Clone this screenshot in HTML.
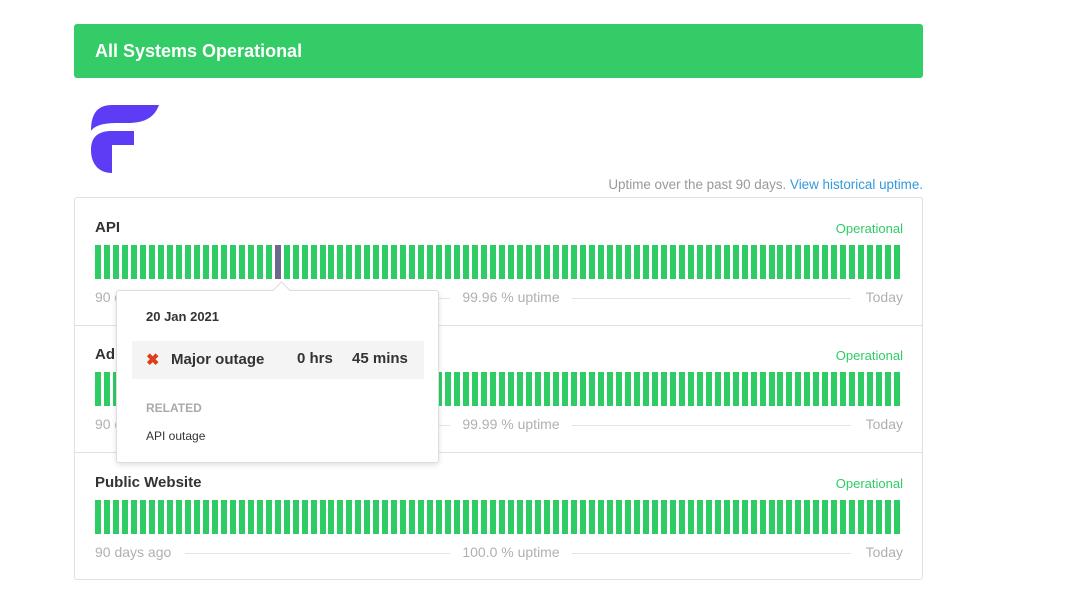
<!DOCTYPE html>
<html><head><style>
body{margin:0;background:#fff;font-family:"Liberation Sans",sans-serif;width:1074px;height:601px;position:relative;overflow:hidden}
.banner{position:absolute;left:74px;top:24px;width:849px;height:54px;background:#33cc66;border-radius:3px;color:#fff;font-weight:bold;font-size:18px;line-height:54px;box-sizing:border-box;padding-left:21px}
.card{position:absolute;left:74px;top:197px;width:849px;height:383px;border:1px solid #e0e0e0;border-radius:3px;box-sizing:border-box}
.row{position:absolute;left:0;width:847px;height:127px;border-bottom:1px solid #e0e0e0}
.t{position:absolute;left:20px;top:21px;font-size:15px;color:#333;font-weight:bold}
.op{position:absolute;right:19px;top:23px;font-size:13px;color:#2fcc66}
.bars{position:absolute;left:20px;top:47px;height:34px;width:810px}
.bars i{position:absolute;top:0;width:6px;height:34px;background:#2fcc66}
.ft{position:absolute;left:20px;right:19px;top:91px;height:14px;font-size:14px;color:#b0b0b0}
.ft .l{position:absolute;left:0}.ft .r{position:absolute;right:0}.ft .c{position:absolute;left:0;right:0;text-align:center;padding-left:24px}
.ft .c span{background:#fff;padding:0 12px;position:relative}
.ft .line{position:absolute;left:90px;right:52px;top:9px;border-top:1px solid #e4e4e4}
.tip{position:absolute;left:116px;top:290px;width:323px;height:173px;background:#fff;border:1px solid #ddd;border-radius:3px;box-shadow:0 2px 6px rgba(0,0,0,.12);box-sizing:border-box}
</style></head><body>
<div class="banner">All Systems Operational</div>
<svg style="position:absolute;left:88px;top:103px" width="74" height="72" viewBox="0 0 74 72">
<path d="M3 28 C3 10 10 2 24 2 L71 2 C66 16 54 20 40 20 L28 20 C15 20 6 23 3 28Z" fill="#5e3cf6"/>
<path d="M3 47 C3 33 11 28 24 28 L46 28 L46 42 L24 42 L24 70 C10 70 3 60 3 47Z" fill="#5e3cf6"/>
</svg>
<div style="position:absolute;right:151px;top:177px;font-size:13.4px;color:#999">Uptime over the past 90 days. <span style="color:#3498db">View historical uptime.</span></div>
<div class="card">
<div class="row" style="top:0"><div class="t">API</div><div class="op">Operational</div><div class="bars" id="b1"></div><div class="ft"><div class="line"></div><span class="l">90 days ago</span><div class="c"><span>99.96 % uptime</span></div><span class="r">Today</span></div></div>
<div class="row" style="top:127px"><div class="t">Admin Panel</div><div class="op">Operational</div><div class="bars" id="b2"></div><div class="ft"><div class="line"></div><span class="l">90 days ago</span><div class="c"><span>99.99 % uptime</span></div><span class="r">Today</span></div></div>
<div class="row" style="top:254px;border:none"><div class="t" style="top:22px">Public Website</div><div class="op" style="top:24px">Operational</div><div class="bars" id="b3" style="top:48px"></div><div class="ft" style="top:92px"><div class="line"></div><span class="l">90 days ago</span><div class="c"><span>100.0 % uptime</span></div><span class="r">Today</span></div></div>
</div>
<div class="tip">
<div style="position:absolute;left:158px;top:-7px;width:12px;height:12px;background:#fff;border-left:1px solid #ddd;border-top:1px solid #ddd;transform:rotate(45deg)"></div>
<div style="position:absolute;left:29px;top:18px;font-size:13px;font-weight:bold;color:#333">20 Jan 2021</div>
<div style="position:absolute;left:15px;top:50px;width:292px;height:38px;background:#f4f4f4">
<span style="position:absolute;left:14px;top:9px;color:#e03e1a;font-weight:bold;font-size:16px">✖</span>
<span style="position:absolute;left:39px;top:10px;font-size:15px;font-weight:bold;color:#333">Major outage</span>
<span style="position:absolute;left:165px;top:9px;font-size:15px;font-weight:bold;color:#333">0 hrs</span>
<span style="position:absolute;left:220px;top:9px;font-size:15px;font-weight:bold;color:#333">45 mins</span></div>
<div style="position:absolute;left:29px;top:110px;font-size:12px;font-weight:bold;color:#aaa">RELATED</div>
<div style="position:absolute;left:29px;top:138px;font-size:12px;color:#333">API outage</div>
</div>
<script>
['b1','b2','b3'].forEach(function(id){var e=document.getElementById(id),h='';for(var i=0;i<90;i++){h+='<i style="left:'+(i*8.98).toFixed(2)+'px'+(id=='b1'&&i==20?';background:#6b6a8e':'')+'"></i>';}e.innerHTML=h;});
</script>
</body></html>
